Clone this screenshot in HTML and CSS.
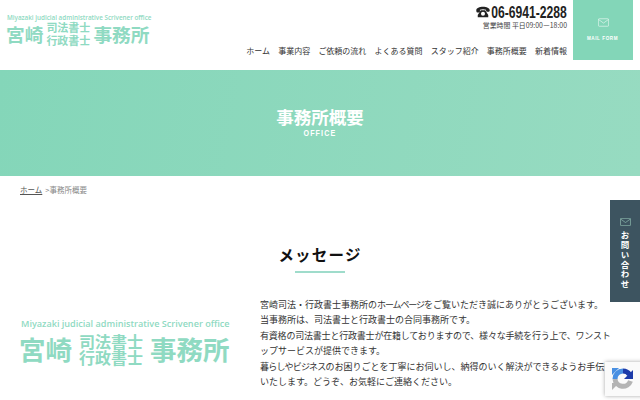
FILE: index.html
```html
<!DOCTYPE html>
<html lang="ja">
<head>
<meta charset="utf-8">
<title>事務所概要</title>
<link rel="stylesheet" href="styles.css">
</head>
<body>
<header class="site-header">
  <a class="logo logo-small">
    <span class="logo-en">Miyazaki judicial administrative Scrivener office</span>
    <span class="logo-ja"><span class="logo-big">宮崎</span><span class="logo-stack"><span>司法書士</span><span>行政書士</span></span><span class="logo-big">事務所</span></span>
  </a>
  <div class="header-right">
    <div class="phone">
      <svg class="phone-icon" viewBox="0 0 16 13"><path d="M0.300 4.500C0.300 2 4 .5 8 .5s7.700 1.500 7.700 4c0 1-.3 1.600-1 1.600h-2.200c-.7 0-1-.5-1-1.600V4C10.500 3.500 9.300 3.300 8 3.300S5.500 3.500 4.500 4v1.500c0 1.100-.3 1.600-1 1.600H1.300C.6 7.100.3 5.500.3 4.500z"/><path fill-rule="evenodd" d="M5.500 4.500h5L14 10v2.500H2V10zM8 6.300a2.300 2.300 0 1 0 0 4.600a2.300 2.300 0 0 0 0-4.600z"/></svg>
      <span class="phone-num">06-6941-2288</span>
    </div>
    <div class="hours">営業時間 平日09:00ー18:00</div>
    <nav class="nav">
      <a>ホーム</a><a>事業内容</a><a>ご依頼の流れ</a><a>よくある質問</a><a>スタッフ紹介</a><a>事務所概要</a><a>新着情報</a>
    </nav>
  </div>
  <a class="mail-btn">
    <svg class="mail-icon" viewBox="0 0 20 15"><rect x=".7" y=".7" width="18.600" height="13.600" rx="1.500"/><path d="M1 2l9 6.500L19 2"/></svg>
    <span>MAIL FORM</span>
  </a>
</header>

<section class="hero">
  <h1>事務所概要</h1>
  <p><span>OFFICE</span></p>
</section>

<div class="crumbs"><a>ホーム</a><span>&gt;事務所概要</span></div>

<main class="message">
  <h2>メッセージ</h2>
  <div class="message-body">
    <div class="logo logo-large">
      <span class="logo-en">Miyazaki judicial administrative Scrivener office</span>
      <span class="logo-ja"><span class="logo-big">宮崎</span><span class="logo-stack"><span>司法書士</span><span>行政書士</span></span><span class="logo-big">事務所</span></span>
    </div>
    <p class="message-text">宮崎司法・行政書士事務所の<span class="tight">ホームページ</span>をご覧いただき誠にありがとうございます。<br>当事務所は、司法書士と行政書士の合同事務所です。<br><span class="tight-line">有資格の司法書士と行政書士が在籍しておりますので、様々な手続を行う上で、ワンスト</span><br>ップサービスが提供できます。<br><span class="tight-soft">暮らしやビジネス</span>のお困りごとを丁寧にお伺いし、納得のいく解決ができるようお手伝いいたします。どうぞ、お気軽にご連絡ください。</p>
  </div>
</main>

<a class="side-tab">
  <svg class="side-icon" viewBox="0 0 20 15"><rect x=".7" y=".7" width="18.600" height="13.600" rx="1"/><path d="M1 2l9 6.500L19 2"/></svg>
  <span>お問い合わせ</span>
</a>

<div class="recaptcha">
  <svg viewBox="0 0 24 24" fill="none" stroke-width="5">
    <path stroke="#b4b4b4" d="M19.500 14A8 8 0 0 1 4 12"/>
    <path stroke="#4a90e2" d="M4 12A8 8 0 0 1 12 4"/>
    <path stroke="#1c3aa9" d="M12 4A8 8 0 0 1 18.500 7.500"/>
    <path fill="#1c3aa9" stroke="none" d="M22 3v9h-9z"/>
    <path fill="#4a90e2" stroke="none" d="M1 1l7 0-7 7z"/>
    <path fill="#b4b4b4" stroke="none" d="M1 23v-7h7z"/>
  </svg>
</div>
</body>
</html>
```

FILE: styles.css
```css
* { box-sizing: border-box; }
html, body { margin: 0; padding: 0; }
body {
  width: 640px;
  height: 400px;
  overflow: hidden;
  position: relative;
  background: #fff;
  color: #222;
  font-family: "Noto Sans CJK JP", "Noto Sans", sans-serif;
}
a { color: inherit; text-decoration: none; }

.site-header {
  height: 70px;
  display: flex;
  align-items: flex-start;
  padding: 0 7px;
}
.logo { display: flex; flex-direction: column; color: #8fdac2; }
.logo-en { font-family: "Open Sans", sans-serif; font-weight: 600; white-space: nowrap; }
.logo-ja { display: flex; align-items: center; font-weight: 700; white-space: nowrap; }
.logo-stack { display: flex; flex-direction: column; }
.logo-small { margin-top: 13px; }
.logo-small .logo-en { font-size: 6.300px; line-height: 9px; }
.logo-small .logo-ja { margin: -1px 0 0 -1px; }
.logo-small .logo-big { font-size: 18.700px; line-height: 22px; }
.logo-small .logo-stack { font-size: 11px; line-height: 13px; margin: 0 3px 0 3px; }
.logo-large { width: 210px; margin-top: 20px; }
.logo-large .logo-en { font-size: 9.100px; line-height: 13px; margin-left: 1px; }
.logo-large .logo-ja { margin: 2px 0 0 -1px; }
.logo-large .logo-big { font-size: 26.500px; line-height: 34px; }
.logo-large .logo-stack { font-size: 16px; line-height: 16px; margin: 0 7px 0 7px; }

.header-right {
  margin-left: auto;
  display: flex;
  flex-direction: column;
  align-items: flex-end;
}
.phone {
  display: flex;
  align-items: center;
  margin-top: 4px;
  height: 17px;
  font-family: "Liberation Sans", sans-serif;
  font-weight: 700;
  font-size: 17px;
  color: #222;
}
.phone-icon { width: 14px; height: 12px; fill: #222; margin-bottom: 2px; }
.phone-num {
  margin-left: -29px;
  transform: scaleX(.714);
  transform-origin: right center;
  white-space: nowrap;
}
.hours { font-size: 6.900px; line-height: 10px; margin-top: -1px; color: #444; white-space: nowrap; }
.nav { display: flex; gap: 8.170px; margin-top: 15px; font-size: 8px; line-height: 12px; color: #333; white-space: nowrap; }

.mail-btn {
  width: 60px;
  height: 60px;
  margin-left: 6px;
  background: #83d6b8;
  color: #fff;
  display: flex;
  flex-direction: column;
  align-items: center;
  padding-top: 18px;
}
.mail-icon { width: 11px; height: 9px; fill: none; stroke: #fff; stroke-width: 1; }
.mail-btn span {
  font-family: "Liberation Sans", sans-serif;
  font-weight: 700;
  font-size: 6px;
  letter-spacing: .8px;
  line-height: 8px;
  margin-top: 7px;
  white-space: nowrap;
  transform: scaleX(.76);
}

.hero {
  height: 106px;
  background: linear-gradient(100deg, #84d6b9, #97dbc1);
  color: #fff;
  text-align: center;
  padding-top: 36px;
}
.hero h1 { margin: 0; font-size: 17.500px; line-height: 21px; font-weight: 700; }
.hero p {
  margin: 0;
  font-family: "Liberation Sans", sans-serif;
  font-weight: 700;
  font-size: 9.500px;
  letter-spacing: 1.500px;
  line-height: 10px;
  padding-top: 1px;
}
.hero p span { display: inline-block; transform: scaleX(.75); }

.crumbs { padding: 8px 20px 0; font-size: 7.500px; line-height: 11px; color: #888; display: flex; gap: 3px; }
.crumbs a { color: #555; text-decoration: underline; }

.message { padding: 0 0 0 20px; }
.message h2 {
  margin: 0 0 0 -20px;
  padding-top: 47px;
  text-align: center;
  font-size: 15.500px;
  line-height: 24px;
  letter-spacing: 1.200px;
  font-weight: 700;
  color: #111;
  display: flex;
  flex-direction: column;
  align-items: center;
}
.message h2::after {
  content: "";
  width: 50px;
  height: 2px;
  margin-top: 5px;
  background: #9fdccb;
}
.message-body { display: flex; gap: 30px; margin-top: 24px; }
.message-text {
  margin: 0;
  width: 354px;
  font-size: 9px;
  line-height: 15.400px;
  color: #333;
}
.tight { letter-spacing: -1.100px; }
.tight-soft { letter-spacing: -.8px; }
.tight-line { letter-spacing: -.2px; }

.side-tab {
  position: absolute;
  left: 610px;
  top: 200px;
  width: 30px;
  height: 102px;
  background: #3d5460;
  color: #fff;
  display: flex;
  flex-direction: column;
  align-items: center;
  padding-top: 18px;
}
.side-icon { width: 11px; height: 8px; fill: none; stroke: #a9dcc9; stroke-width: 1; }
.side-tab span { writing-mode: vertical-rl; font-size: 8.500px; font-weight: 700; line-height: 10px; margin-top: 5px; letter-spacing: 1.200px; }

.recaptcha {
  position: absolute;
  left: 605px;
  top: 362px;
  width: 40px;
  height: 34px;
  background: #fafafa;
  box-shadow: 0 0 4px rgba(0,0,0,.35);
  padding: 5px 0 0 6px;
}
.recaptcha svg { width: 24px; height: 24px; display: block; }
```
